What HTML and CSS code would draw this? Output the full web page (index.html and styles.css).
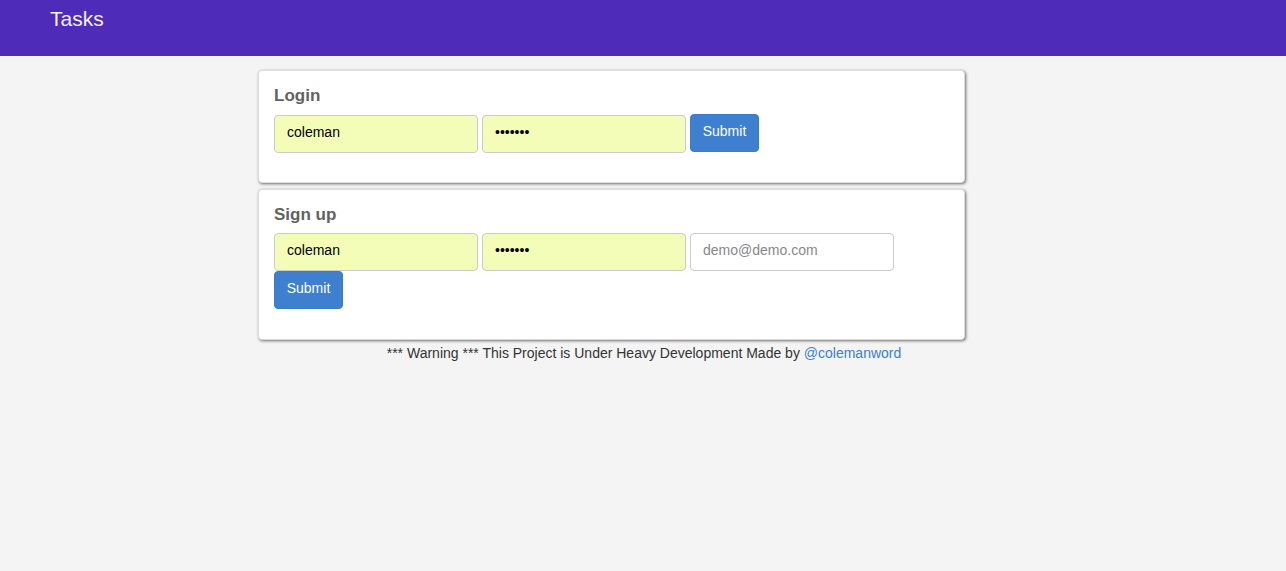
FILE: index.html
```html
<!DOCTYPE html>
<html>
<head>
<meta charset="utf-8">
<title>Tasks</title>
<link rel="stylesheet" href="styles.css">
</head>
<body>
<header class="topbar">
  <span class="brand">Tasks</span>
</header>
<main class="main">
  <section class="card">
    <h2 class="card-title">Login</h2>
    <form class="form-row">
      <input class="field filled" type="text" value="coleman">
      <input class="field filled" type="password" value="coleman">
      <button class="btn btn-login" type="button">Submit</button>
    </form>
  </section>
  <section class="card card-signup">
    <h2 class="card-title">Sign up</h2>
    <form class="form-row">
      <input class="field filled" type="text" value="coleman">
      <input class="field filled" type="password" value="coleman">
      <input class="field" type="email" placeholder="demo@demo.com">
      <button class="btn" type="button">Submit</button>
    </form>
  </section>
  <p class="footer">*** Warning *** This Project is Under Heavy Development Made by <a href="#">@colemanword</a></p>
</main>
</body>
</html>
```
FILE: styles.css
```css
html, body {
  margin: 0;
  padding: 0;
}
body {
  background: #f4f4f4;
  font-family: "Liberation Sans", Arial, sans-serif;
  font-size: 14px;
  color: #333;
}
.topbar {
  height: 56px;
  background: #4e2bb8;
  box-sizing: border-box;
  padding: 7px 0 0 50px;
}
.brand {
  display: block;
  color: #f4f0ff;
  font-size: 21px;
  line-height: 24px;
}
.main {
  padding: 14px 0 0 0;
}
.card {
  width: 707px;
  margin: 0 0 6px 258px;
  box-sizing: border-box;
  background: #fff;
  border: 1px solid #ddd;
  border-radius: 4px;
  box-shadow: 1px 1px 3px rgba(0, 0, 0, 0.55);
  padding: 15px 15px 29px 15px;
}
.card-title {
  margin: 0 0 10px 0;
  font-size: 17px;
  line-height: 19px;
  font-weight: bold;
  color: #626262;
}
.card-signup {
  padding-bottom: 30px;
}
.card-signup .card-title {
  margin-bottom: 9px;
}
.form-row {
  display: flex;
  flex-wrap: wrap;
  align-items: flex-start;
  column-gap: 4px;
  row-gap: 0;
  margin: 0;
}
.field {
  width: 204px;
  height: 38px;
  box-sizing: border-box;
  border: 1px solid #ccc;
  border-radius: 4px;
  padding: 0 12px 4px 12px;
  font-family: "Liberation Sans", Arial, sans-serif;
  font-size: 14px;
  color: #000;
  background: #fff;
  outline: none;
}
.field.filled {
  background: #f3fdb8;
}
.field::placeholder {
  color: #888;
}
.btn {
  height: 38px;
  width: 69px;
  box-sizing: border-box;
  border: 1px solid #3a7bcc;
  border-radius: 4px;
  background: #3e7fd0;
  color: #fff;
  font-family: "Liberation Sans", Arial, sans-serif;
  font-size: 14px;
  padding: 0 0 4px 0;
  cursor: pointer;
}
.btn-login {
  margin-top: -1px;
}
.footer {
  margin: -3px 0 0 0;
  padding-left: 2px;
  text-align: center;
  line-height: 20px;
  color: #333;
}
.footer a {
  color: #3a7fd0;
  text-decoration: none;
}
```
